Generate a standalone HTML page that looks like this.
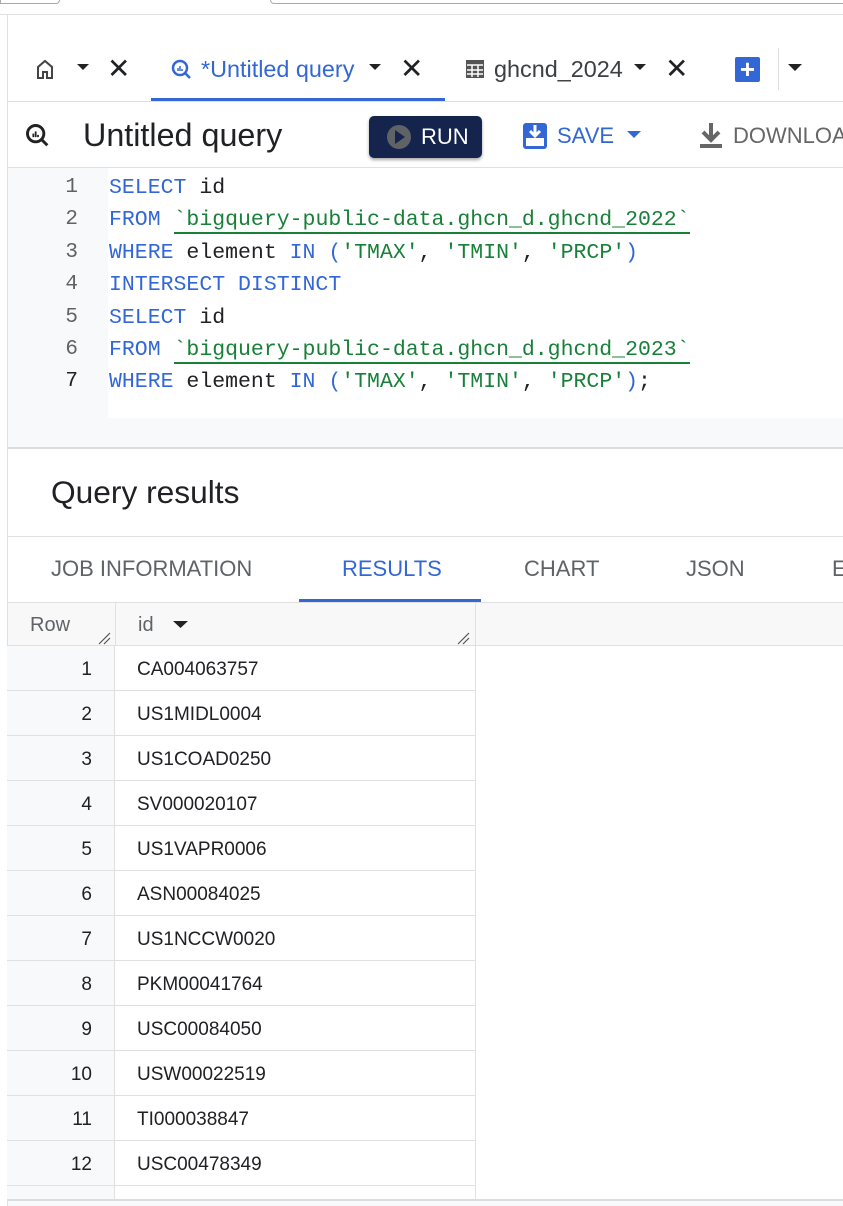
<!DOCTYPE html><html><head><style>
*{margin:0;padding:0;box-sizing:border-box}
body{width:843px;height:1206px;position:relative;overflow:hidden;background:#fff;font-family:"Liberation Sans",sans-serif;color:#202124}
.a{position:absolute;white-space:nowrap}
.code{font-family:"Liberation Mono",monospace;font-size:21.5px}
.k{color:#3367d6}.s{color:#188038}
.ln{color:#5f6368;font-family:"Liberation Mono",monospace;font-size:21px;width:30px;text-align:right}
.row{position:absolute;left:7px;width:468px;height:45px;border-bottom:1px solid #e0e0e0;font-size:19px}
.row .n{position:absolute;left:0;width:108px;height:44px;background:#f8f9fa;border-right:1px solid #e0e0e0;text-align:right;padding-right:22px;line-height:48px}
.row .v{position:absolute;left:130px;line-height:48px}
.tab{position:absolute;top:556px;font-size:22px;color:#5f6368;font-weight:500}
</style></head><body>
<div class="a" style="left:0;top:0;width:60px;height:4px;border:1px solid #aaa;border-top:none;border-radius:0 0 6px 0"></div>
<div class="a" style="left:270px;top:0;width:580px;height:4px;border:1px solid #aaa;border-top:none;border-radius:0 0 0 6px"></div>
<div class="a" style="left:0;top:14px;width:843px;height:1px;background:#e0e0e0"></div>
<div class="a" style="left:7px;top:14px;width:1px;height:1192px;background:#e0e0e0"></div>
<div class="a" style="left:151px;top:37px;width:294px;height:64px;background:#fff;border-radius:6px 6px 0 0"></div>
<div class="a" style="left:151px;top:98px;width:294px;height:4px;background:#3367d6"></div>
<div class="a" style="left:8px;top:101px;width:835px;height:1px;background:#e0e0e0"></div>
<svg class="a" style="left:35px;top:58px" width="20" height="22" viewBox="0 0 20 22"><path d="M3 20V9l7-6 7 6v11H12v-6H8v6z" fill="none" stroke="#444" stroke-width="2"/></svg>
<svg class="a" style="left:77px;top:64px" width="12" height="8"><path d="M0 0h12L6 6z" fill="#222"/></svg>
<div class="a" style="left:107px;top:52px;font-size:28px">✕</div>
<svg class="a" style="left:170px;top:58px" width="24" height="24" viewBox="0 0 24 24"><circle cx="10" cy="10" r="7" fill="none" stroke="#3367d6" stroke-width="2.5"/><path d="M15 15l5 5" stroke="#3367d6" stroke-width="2.5"/><path d="M8 13v-3M10 13V8M12 13v-2" stroke="#3367d6" stroke-width="1.5"/></svg>
<div class="a" style="left:201px;top:56px;font-size:23.4px;color:#3367d6">*Untitled query</div>
<svg class="a" style="left:369px;top:64px" width="12" height="8"><path d="M0 0h12L6 6z" fill="#222"/></svg>
<div class="a" style="left:400px;top:52px;font-size:28px">✕</div>
<svg class="a" style="left:466px;top:60px" width="18" height="18"><rect x="0" y="0" width="18" height="18" fill="#555"/><path d="M1 5h16M1 10h16M1 14h16M6 5v12M12 5v12" stroke="#fff" stroke-width="1.5"/></svg>
<div class="a" style="left:494px;top:56px;font-size:23.4px;color:#3c4043">ghcnd_2024</div>
<svg class="a" style="left:634px;top:64px" width="12" height="8"><path d="M0 0h12L6 6z" fill="#222"/></svg>
<div class="a" style="left:665px;top:52px;font-size:28px">✕</div>
<div class="a" style="left:735px;top:57px;width:25px;height:25px;background:#3367d6;border-radius:2px;color:#fff;font-size:26px;line-height:24px;text-align:center;font-weight:bold">+</div>
<div class="a" style="left:778px;top:48px;width:1px;height:42px;background:#ddd"></div>
<svg class="a" style="left:788px;top:64px" width="14" height="8"><path d="M0 0h14L7 7z" fill="#222"/></svg>
<svg class="a" style="left:24px;top:122px" width="28" height="28" viewBox="0 0 24 24"><circle cx="10" cy="10" r="7" fill="none" stroke="#222" stroke-width="2.5"/><path d="M15 15l5 5" stroke="#222" stroke-width="2.5"/><path d="M8 13v-3M10 13V8M12 13v-2" stroke="#222" stroke-width="1.5"/></svg>
<div class="a" style="left:83px;top:117px;font-size:32.3px;color:#202124">Untitled query</div>
<div class="a" style="left:369px;top:116px;width:113px;height:42px;background:#15244d;border-radius:5px;box-shadow:0 2px 3px rgba(0,0,0,.35)"></div>
<div class="a" style="left:387px;top:125px;width:24px;height:24px;border-radius:50%;background:#5f6368"></div>
<svg class="a" style="left:395px;top:130px" width="10" height="14"><path d="M0 0l10 7-10 7z" fill="#15244d"/></svg>
<div class="a" style="left:421px;top:124px;font-size:22px;color:#fff">RUN</div>
<svg class="a" style="left:522px;top:122px" width="26" height="28" viewBox="0 0 26 28"><rect x="1" y="1" width="24" height="26" rx="3" fill="#3367d6"/><rect x="4" y="16" width="18" height="8" fill="#fff"/><path d="M13 3v10M8 9l5 5 5-5" stroke="#fff" stroke-width="3" fill="none"/></svg>
<div class="a" style="left:557px;top:123px;font-size:22px;color:#3367d6;font-weight:500">SAVE</div>
<svg class="a" style="left:627px;top:131px" width="14" height="8"><path d="M0 0h14L7 7z" fill="#3367d6"/></svg>
<svg class="a" style="left:699px;top:123px" width="24" height="26"><path d="M12 0v16M4 9l8 8 8-8" stroke="#666" stroke-width="4" fill="none"/><rect x="1" y="21" width="22" height="4" fill="#666"/></svg>
<div class="a" style="left:733px;top:123px;font-size:22px;color:#666;font-weight:500">DOWNLOAD</div>
<div class="a" style="left:8px;top:167px;width:835px;height:1px;background:#e0e0e0"></div>
<div class="a" style="left:8px;top:168px;width:100px;height:250px;background:#f8f9fa"></div>
<div class="a" style="left:8px;top:418px;width:835px;height:30px;background:#f8f9fa"></div>
<div class="a" style="left:8px;top:447px;width:835px;height:2px;background:#dadce0"></div>
<div class="a ln" style="left:48px;top:172px;line-height:32.4px">1<br>2<br>3<br>4<br>5<br>6<br><span style="color:#202124">7</span></div>
<div class="a code" style="left:109px;top:172px;line-height:32.4px">
<span class="k">SELECT</span> id<br>
<span class="k">FROM</span> <span class="s" style="border-bottom:2px solid #188038">`bigquery-public-data.ghcn_d.ghcnd_2022`</span><br>
<span class="k">WHERE</span> element <span class="k">IN (</span><span class="s">'TMAX'</span>, <span class="s">'TMIN'</span>, <span class="s">'PRCP'</span><span class="k">)</span><br>
<span class="k">INTERSECT DISTINCT</span><br>
<span class="k">SELECT</span> id<br>
<span class="k">FROM</span> <span class="s" style="border-bottom:2px solid #188038">`bigquery-public-data.ghcn_d.ghcnd_2023`</span><br>
<span class="k">WHERE</span> element <span class="k">IN (</span><span class="s">'TMAX'</span>, <span class="s">'TMIN'</span>, <span class="s">'PRCP'</span><span class="k">)</span>;
</div>
<div class="a" style="left:51px;top:474px;font-size:31.7px;color:#202124">Query results</div>
<div class="a" style="left:8px;top:536px;width:835px;height:1px;background:#e0e0e0"></div>
<div class="tab" style="left:51px">JOB INFORMATION</div>
<div class="tab" style="left:342px;color:#3367d6">RESULTS</div>
<div class="tab" style="left:524px">CHART</div>
<div class="tab" style="left:686px">JSON</div>
<div class="tab" style="left:832px">E</div>
<div class="a" style="left:299px;top:599px;width:182px;height:3px;background:#3367d6"></div>
<div class="a" style="left:8px;top:602px;width:835px;height:1px;background:#e0e0e0"></div>
<div class="a" style="left:8px;top:603px;width:835px;height:43px;background:#f8f8f8;border-bottom:1px solid #e0e0e0"></div>
<div class="a" style="left:115px;top:603px;width:1px;height:43px;background:#e0e0e0"></div>
<div class="a" style="left:475px;top:603px;width:1px;height:43px;background:#e0e0e0"></div>
<div class="a" style="left:30px;top:614px;font-size:20px;color:#5f6368;font-weight:500">Row</div>
<div class="a" style="left:138px;top:614px;font-size:20px;color:#5f6368;font-weight:500">id</div>
<svg class="a" style="left:173px;top:621px" width="15" height="8"><path d="M0 0h15L7.5 7z" fill="#222"/></svg>
<svg class="a" style="left:98px;top:632px" width="14" height="13"><path d="M1 12L12 1M6 12l6-6" stroke="#555" stroke-width="1.2"/></svg>
<svg class="a" style="left:457px;top:632px" width="14" height="13"><path d="M1 12L12 1M6 12l6-6" stroke="#555" stroke-width="1.2"/></svg>
<div class="a" style="left:475px;top:646px;width:1px;height:554px;background:#e0e0e0"></div>
<div class="row" style="top:646px"><div class="n">1</div><div class="v">CA004063757</div></div>
<div class="row" style="top:691px"><div class="n">2</div><div class="v">US1MIDL0004</div></div>
<div class="row" style="top:736px"><div class="n">3</div><div class="v">US1COAD0250</div></div>
<div class="row" style="top:781px"><div class="n">4</div><div class="v">SV000020107</div></div>
<div class="row" style="top:826px"><div class="n">5</div><div class="v">US1VAPR0006</div></div>
<div class="row" style="top:871px"><div class="n">6</div><div class="v">ASN00084025</div></div>
<div class="row" style="top:916px"><div class="n">7</div><div class="v">US1NCCW0020</div></div>
<div class="row" style="top:961px"><div class="n">8</div><div class="v">PKM00041764</div></div>
<div class="row" style="top:1006px"><div class="n">9</div><div class="v">USC00084050</div></div>
<div class="row" style="top:1051px"><div class="n">10</div><div class="v">USW00022519</div></div>
<div class="row" style="top:1096px"><div class="n">11</div><div class="v">TI000038847</div></div>
<div class="row" style="top:1141px"><div class="n">12</div><div class="v">USC00478349</div></div>
<div class="row" style="top:1186px;height:13px;border:none"><div class="n" style="height:13px"></div></div>
<div class="a" style="left:8px;top:1199px;width:835px;height:2px;background:#dadce0"></div>
<div class="a" style="left:8px;top:1201px;width:835px;height:5px;background:#f8f9fa"></div>
</body></html>
